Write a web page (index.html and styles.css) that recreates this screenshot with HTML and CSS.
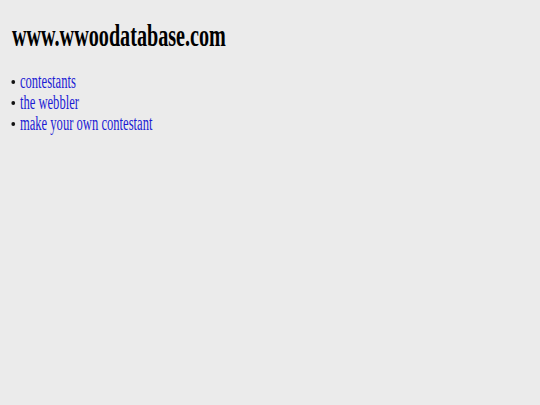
FILE: index.html
```html
<!DOCTYPE html>
<html lang="en">
<head>
  <meta charset="UTF-8" />
  <title>www.wwoodatabase.com</title>
  <link rel="stylesheet" href="styles.css">
</head>
<body>
  <div class="page">
    <h1>www.wwoodatabase.com</h1>
    <ul class="menu">
      <li><a href="#">contestants</a></li>
      <li><a href="#">the webbler</a></li>
      <li><a href="#">make your own contestant</a></li>
    </ul>
  </div>
</body>
</html>
```

FILE: styles.css
```css
body {
  margin: 0;
  padding: 17px 12px;
  background: #ebebeb;
  font-family: 'Liberation Serif', 'Times New Roman', serif;
  color: #000;
}
/* narrow the whole page, the glyphs are drawn condensed */
.page {
  transform: scaleX(0.63);
  transform-origin: 0 0;
}
h1 {
  font-size: 32px;
  font-weight: bold;
  line-height: 36px;
  margin: 0 0 18px;
}
.menu {
  margin: 0;
  padding: 0;
  list-style: none;
  font-size: 20px;
  line-height: 21px;
}
/* round dot, widened so it stays round after the squeeze */
.menu li::before {
  content: '';
  display: inline-block;
  width: 6px;
  height: 4px;
  margin: 0 8px 0 -1.5px;
  border-radius: 50%;
  background: #111;
  vertical-align: 4px;
}
.menu a {
  color: #1c1cd4;
  text-decoration: none;
}
```
